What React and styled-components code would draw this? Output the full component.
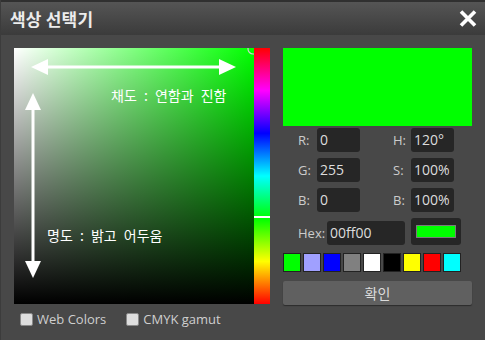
import styled, { createGlobalStyle } from "styled-components";

const GlobalStyle = createGlobalStyle`
  html, body {
    margin: 0;
    padding: 0;
    background: #ffffff;
  }
  body {
    font-family: "Open Sans", "Noto Sans CJK KR", sans-serif;
  }
`;

const Window = styled.div`
  width: 485px;
  height: 340px;
  background: #484848;
  display: flex;
  flex-direction: column;
  box-sizing: border-box;
  border-left: 1px solid #3c3c3c;
`;

const TitleBar = styled.div`
  height: 33px;
  border-top: 2px solid #303030;
  background: linear-gradient(#555555, #3b3b3b);
  display: flex;
  align-items: center;
  justify-content: space-between;
  padding: 0 7px 0 9px;
`;

const Title = styled.h1`
  margin: 0;
  font-family: "Noto Sans CJK KR", sans-serif;
  font-size: 17px;
  font-weight: 700;
  color: #ececec;
  letter-spacing: 0.2px;
`;

const CloseButton = styled.button`
  border: 0;
  background: none;
  padding: 0;
  width: 20px;
  height: 20px;
  display: flex;
  align-items: center;
  justify-content: center;
  cursor: pointer;
`;

const Body = styled.div`
  display: flex;
  gap: 13px;
  padding: 13px 13px 0 13px;
`;

const LeftCol = styled.div`
  display: flex;
  flex-direction: column;
`;

const PickerRow = styled.div`
  display: flex;
`;

const SatVal = styled.div`
  position: relative;
  width: 240px;
  height: 256px;
  overflow: hidden;
  background: linear-gradient(to top, #000000, rgba(0, 0, 0, 0)),
    linear-gradient(to right, #ffffff, #00ff00);
`;

const Overlay = styled.svg`
  position: absolute;
  left: 0;
  top: 0;
`;

const AreaLabel = styled.span`
  position: absolute;
  left: ${(p) => p.$x}px;
  top: ${(p) => p.$y}px;
  font-family: "Noto Sans CJK KR", sans-serif;
  font-size: 14px;
  line-height: 16px;
  word-spacing: 4px;
  color: #ffffff;
  white-space: pre;
`;

const HueBar = styled.div`
  position: relative;
  width: 16px;
  height: 256px;
  background: linear-gradient(
    to bottom,
    #ff0000 0%,
    #ff00ff 16.67%,
    #0000ff 33.33%,
    #00ffff 50%,
    #00ff00 66.67%,
    #ffff00 83.33%,
    #ff0000 100%
  );
`;

const HueMarker = styled.div`
  position: absolute;
  left: 0;
  right: 0;
  top: ${(p) => p.$top}px;
  height: 2px;
  background: #ffffff;
`;

const Options = styled.div`
  display: flex;
  gap: 20px;
  padding: 6px 0 0 6px;
`;

const Option = styled.label`
  display: flex;
  align-items: center;
  gap: 4px;
  font-size: 13px;
  color: #cfcfcf;
`;

const Check = styled.span`
  width: 11px;
  height: 11px;
  background: #dedede;
  border: 1px solid #8a8a8a;
  border-radius: 2px;
`;

const RightCol = styled.div`
  width: 189px;
  display: flex;
  flex-direction: column;
`;

const Preview = styled.div`
  height: 78px;
  background: ${(p) => p.$color};
`;

const Fields = styled.div`
  display: flex;
  flex-direction: column;
  gap: 6px;
  padding: 2px 0 0 15px;
`;

const FieldRow = styled.div`
  display: flex;
  align-items: flex-end;
  gap: ${(p) => p.$gap || 33}px;
`;

const Field = styled.div`
  display: flex;
  align-items: center;
`;

const Label = styled.span`
  width: ${(p) => p.$w}px;
  font-size: 13px;
  color: #cccccc;
`;

const Input = styled.div`
  width: ${(p) => p.$w || 43}px;
  height: 24px;
  box-sizing: border-box;
  background: #262626;
  border-radius: 3px;
  padding-left: 3px;
  font-size: 14px;
  line-height: 24px;
  color: #dddddd;
`;

const SwatchBox = styled.div`
  width: 50px;
  height: 27px;
  box-sizing: border-box;
  background: #262626;
  border-radius: 3px;
  display: flex;
  align-items: center;
  justify-content: center;
`;

const SwatchInner = styled.div`
  width: 40px;
  height: 13px;
  box-sizing: border-box;
  border: 1px solid #7a7a7a;
  background: ${(p) => p.$color};
`;

const Palette = styled.div`
  display: flex;
  gap: 2px;
  margin-top: 8px;
`;

const PaletteSwatch = styled.div`
  width: 18px;
  height: 19px;
  box-sizing: border-box;
  border: 1px solid #222222;
  background: ${(p) => p.$color};
`;

const OkButton = styled.button`
  margin-top: 9px;
  height: 24px;
  border: 0;
  border-radius: 2px;
  background: #606060;
  box-shadow: 0 1px 1px #2c2c2c;
  font-family: "Noto Sans CJK KR", sans-serif;
  font-size: 14px;
  color: #dcdcdc;
  cursor: pointer;
`;

const palette = [
  "#00ff00",
  "#a0a0ff",
  "#0000ff",
  "#808080",
  "#ffffff",
  "#000000",
  "#ffff00",
  "#ff0000",
  "#00ffff",
];

function Arrows() {
  return (
    <Overlay width="240" height="256" viewBox="0 0 240 256">
      <line x1="30" y1="19" x2="209" y2="19" stroke="#fff" strokeWidth="3" />
      <polygon points="17,19 34,11 34,27" fill="#fff" />
      <polygon points="222,19 205,11 205,27" fill="#fff" />
      <line x1="19" y1="58" x2="19" y2="217" stroke="#fff" strokeWidth="3" />
      <polygon points="19,45 11,62 27,62" fill="#fff" />
      <polygon points="19,230 11,213 27,213" fill="#fff" />
      <circle cx="239" cy="1" r="5" fill="none" stroke="#d0d0d0" strokeWidth="1.2" />
    </Overlay>
  );
}

export default function App() {
  return (
    <>
      <GlobalStyle />
      <Window>
        <TitleBar>
          <Title>색상 선택기</Title>
          <CloseButton aria-label="close">
            <svg width="18" height="17" viewBox="0 0 18 17">
              <path d="M2 1.5 L16 15.5 M16 1.5 L2 15.5" stroke="#fff" strokeWidth="3.6" />
            </svg>
          </CloseButton>
        </TitleBar>
        <Body>
          <LeftCol>
            <PickerRow>
              <SatVal>
                <Arrows />
                <AreaLabel $x={97} $y={39}>채도 : 연함과 진함</AreaLabel>
                <AreaLabel $x={33} $y={179}>명도 : 밝고 어두움</AreaLabel>
              </SatVal>
              <HueBar>
                <HueMarker $top={168} />
              </HueBar>
            </PickerRow>
            <Options>
              <Option>
                <Check />
                Web Colors
              </Option>
              <Option>
                <Check />
                CMYK gamut
              </Option>
            </Options>
          </LeftCol>
          <RightCol>
            <Preview $color="#00ff00" />
            <Fields>
              <FieldRow>
                <Field>
                  <Label $w={19}>R:</Label>
                  <Input>0</Input>
                </Field>
                <Field>
                  <Label $w={18}>H:</Label>
                  <Input>120°</Input>
                </Field>
              </FieldRow>
              <FieldRow>
                <Field>
                  <Label $w={19}>G:</Label>
                  <Input>255</Input>
                </Field>
                <Field>
                  <Label $w={18}>S:</Label>
                  <Input>100%</Input>
                </Field>
              </FieldRow>
              <FieldRow>
                <Field>
                  <Label $w={19}>B:</Label>
                  <Input>0</Input>
                </Field>
                <Field>
                  <Label $w={18}>B:</Label>
                  <Input>100%</Input>
                </Field>
              </FieldRow>
              <FieldRow $gap={6}>
                <Field>
                  <Label $w={29}>Hex:</Label>
                  <Input $w={78}>00ff00</Input>
                </Field>
                <SwatchBox>
                  <SwatchInner $color="#00ff00" />
                </SwatchBox>
              </FieldRow>
            </Fields>
            <Palette>
              {palette.map((c) => (
                <PaletteSwatch key={c} $color={c} />
              ))}
            </Palette>
            <OkButton>확인</OkButton>
          </RightCol>
        </Body>
      </Window>
    </>
  );
}
